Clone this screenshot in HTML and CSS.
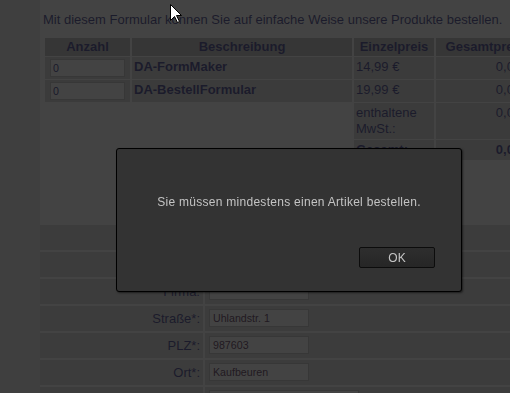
FILE: index.html
```html
<!DOCTYPE html>
<html lang="de">
<head>
  <meta charset="UTF-8">
  <title>Bestellformular</title>
  <link rel="stylesheet" href="styles.css">
</head>
<body>
  <div class="page">
    <p class="intro">Mit diesem Formular können Sie auf einfache Weise unsere Produkte bestellen.</p>

    <table class="products">
      <tr>
        <th class="col-qty">Anzahl</th>
        <th class="col-desc">Beschreibung</th>
        <th class="col-price">Einzelpreis</th>
        <th class="col-total">Gesamtpreis</th>
      </tr>
      <tr>
        <td class="cell"><input class="qty" type="text" value="0"></td>
        <td class="cell name">DA-FormMaker</td>
        <td class="cell">14,99 €</td>
        <td class="cell num">0,00 €</td>
      </tr>
      <tr>
        <td class="cell"><input class="qty" type="text" value="0"></td>
        <td class="cell name">DA-BestellFormular</td>
        <td class="cell">19,99 €</td>
        <td class="cell num">0,00 €</td>
      </tr>
      <tr>
        <td colspan="2"></td>
        <td class="cell">enthaltene MwSt.:</td>
        <td class="cell num">0,00 €</td>
      </tr>
      <tr class="sum">
        <td colspan="2"></td>
        <td class="cell">Gesamt:</td>
        <td class="cell num">0,00 €</td>
      </tr>
    </table>

    <div class="address">
      <div class="label">Anrede:</div>
      <div class="field"><input class="text" type="text" value=""></div>
      <div class="label">Name*:</div>
      <div class="field"><input class="text" type="text" value=""></div>
      <div class="label">Firma:</div>
      <div class="field"><input class="text" type="text" value=""></div>
      <div class="label">Straße*:</div>
      <div class="field"><input class="text" type="text" value="Uhlandstr. 1"></div>
      <div class="label">PLZ*:</div>
      <div class="field"><input class="text" type="text" value="987603"></div>
      <div class="label">Ort*:</div>
      <div class="field"><input class="text" type="text" value="Kaufbeuren"></div>
      <div class="label">E-Mail*:</div>
      <div class="field"><input class="text wide" type="text" value=""></div>
    </div>
  </div>

  <div class="overlay"></div>

  <div class="dialog">
    <div class="message">Sie müssen mindestens einen Artikel bestellen.</div>
    <div class="buttons">
      <button class="ok">OK</button>
    </div>
  </div>

  <svg class="cursor" width="13" height="20" viewBox="0 0 13 20">
    <path d="M0.5 0.5 V16.5 L4.5 12.5 L7.5 18.5 L9.5 17.5 L6.5 11.5 H11.5 Z" fill="#fff" stroke="#000" stroke-width="1"/>
  </svg>
</body>
</html>
```

FILE: styles.css
```css
html, body {
  overflow: hidden;
}
body {
  margin: 0;
  background: #e6e6e6;
  font-family: "Liberation Sans", Arial, sans-serif;
  font-size: 13px;
  color: #10106e;
}
.page {
  margin-left: 40px;
  padding-top: 12px;
  min-height: 420px;
  background: #fff;
}
.intro {
  margin: 0 3px;
  line-height: 15px;
  white-space: nowrap;
}
.products {
  margin: 10px 0 0 3px;
  border-collapse: separate;
  border-spacing: 2px 1px;
  table-layout: fixed;
  width: 493px;
}
.products th {
  background: #b0b0b0;
  font-weight: bold;
  line-height: 16px;
  padding: 1px 2px;
  text-align: center;
  white-space: nowrap;
  overflow: hidden;
}
.col-qty { width: 81px; }
.col-desc { width: 216px; }
.col-price { width: 76px; }
.col-total { width: 94px; }
.products td {
  padding: 2px;
  line-height: 16px;
  vertical-align: top;
}
.products td.cell {
  background: #cecece;
}
.name {
  font-weight: bold;
}
.num {
  text-align: right;
}
.sum td {
  font-weight: bold;
}
.qty {
  display: block;
  box-sizing: border-box;
  width: 75px;
  height: 18px;
  margin-left: 3px;
  padding: 0 2px;
  border: 1px solid #b8b8b8;
  background: #fff;
  font-family: "Liberation Sans", Arial, sans-serif;
  font-size: 8pt;
  color: #00006a;
}
.address {
  margin-top: 64px;
  display: grid;
  grid-template-columns: 163px 1fr;
  grid-auto-rows: 25px;
  gap: 2px;
}
.label {
  background: #d4d4d4;
  text-align: right;
  padding-right: 3px;
  line-height: 25px;
}
.field {
  background: #d4d4d4;
  padding: 3px 4px;
}
.text {
  display: block;
  box-sizing: border-box;
  width: 100px;
  height: 18px;
  padding: 0 3px;
  border: 1px solid #b8b8b8;
  background: #fff;
  font-family: "Liberation Sans", Arial, sans-serif;
  font-size: 8pt;
  color: #300030;
}
.text.wide {
  width: 150px;
}
.overlay {
  position: fixed;
  inset: 0;
  background: rgba(30, 30, 30, 0.835);
}
.dialog {
  position: fixed;
  left: 116px;
  top: 148px;
  width: 346px;
  height: 144px;
  box-sizing: border-box;
  border: 1px solid #000;
  border-radius: 3px;
  background: #333;
  box-shadow: 1px 1px 2px rgba(0, 0, 0, 0.5);
  font-family: "Liberation Sans", Arial, sans-serif;
  font-size: 12px;
  color: #c4c4c4;
  display: flex;
  flex-direction: column;
}
.message {
  padding-top: 45px;
  line-height: 16px;
  text-align: center;
  letter-spacing: 0.28px;
}
.buttons {
  margin-top: 37px;
  padding-right: 26px;
  display: flex;
  justify-content: flex-end;
}
.ok {
  width: 76px;
  height: 21px;
  border: 1px solid #0c0c0c;
  border-radius: 2px;
  background: linear-gradient(#2e2e2e, #262626);
  color: #c4c4c4;
  font-family: "Liberation Sans", Arial, sans-serif;
  font-size: 12px;
  padding: 0;
}
.cursor {
  position: fixed;
  left: 170px;
  top: 4px;
}
```
